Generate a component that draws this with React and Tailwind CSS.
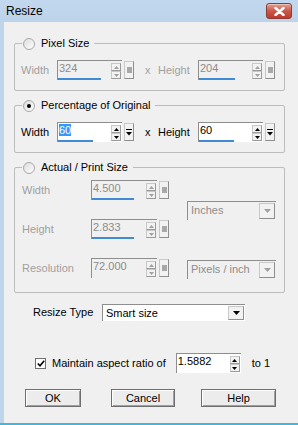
import React from 'react';

const font = { fontFamily: '"Liberation Sans", Arial, sans-serif' };

function Radio({ checked }) {
  return (
    <span className="flex h-[12px] w-[12px] items-center justify-center rounded-full border border-[#a8a8a8] bg-gradient-to-br from-[#dcdcdc] to-white">
      {checked && <span className="h-[4px] w-[4px] rounded-full bg-black" />}
    </span>
  );
}

function Group({ label, checked, className, children }) {
  return (
    <div className={`w-[271px] rounded-[2px] border border-[#bcbcbc] ${className}`}>
      <div className="-mt-[7px] ml-[7px] flex h-[13px] w-fit items-center gap-[6px] bg-[#f0f0f0] pl-[1px] pr-[5px] text-black">
        <Radio checked={checked} />
        <span>{label}</span>
      </div>
      {children}
    </div>
  );
}

function Arrow({ up, disabled }) {
  return (
    <svg width="5" height="3" viewBox="0 0 5 3" className="block">
      <path d={up ? 'M0 3h5L2.5 0z' : 'M0 0h5L2.5 3z'} fill={disabled ? '#a0a0a0' : '#000'} />
    </svg>
  );
}

function SpinBtn({ up, disabled }) {
  return (
    <div className="flex h-[8px] w-[10px] items-center justify-center border border-[#c8c8c8] border-r-[#9a9a9a] border-b-[#9a9a9a] bg-[#f2f2f2]">
      <Arrow up={up} disabled={disabled} />
    </div>
  );
}

function Spin({ value, disabled, bar, sel, square = true, w = 'w-[65px]' }) {
  return (
    <div className="flex items-start gap-[2px]">
      <div
        className={`relative flex h-[20px] ${w} border-l border-t border-[#8e8e8e] ${disabled ? 'bg-[#f0f0f0] text-[#8c8c8c]' : 'bg-white text-black'}`}
      >
        <div className="flex-1 pl-[1px] pt-[1px] leading-[13px]">
          {sel ? <span className="bg-[#3399ff] text-white">{value}</span> : value}
        </div>
        <div className="mr-[1px] mt-[2px] flex flex-col">
          <SpinBtn up disabled={disabled} />
          <SpinBtn disabled={disabled} />
        </div>
        {bar && <div className={`absolute bottom-0 left-0 h-[2px] bg-[#3f8bd6] ${bar}`} />}
      </div>
      {square && (
        <div className="mt-[1px] flex h-[18px] w-[10px] items-center justify-center border border-[#c8c8c8] border-r-[#8e8e8e] border-b-[#8e8e8e] bg-[#f2f2f2]">
          {disabled ? (
            <span className="h-[6px] w-[5px] bg-[#a8a8a8]" />
          ) : (
            <svg width="6" height="7" viewBox="0 0 6 7">
              <path d="M0 0.5h6" stroke="#000" />
              <path d="M0 3h6L3 6.5z" fill="#000" />
            </svg>
          )}
        </div>
      )}
    </div>
  );
}

function Combo({ text, disabled, w, h = 'h-[19px]' }) {
  return (
    <div
      className={`flex ${w} ${h} items-start border-l border-t border-[#8e8e8e] ${disabled ? 'bg-[#f0f0f0] text-[#8c8c8c]' : 'bg-white text-black'}`}
    >
      <span className="flex-1 pl-[3px] pt-[2px] leading-[13px]">{text}</span>
      <div className="m-[1px] flex h-[calc(100%-2px)] w-[16px] items-center justify-center border border-[#c8c8c8] border-r-[#8e8e8e] border-b-[#8e8e8e] bg-[#f2f2f2]">
        <svg width="7" height="4" viewBox="0 0 7 4">
          <path d="M0 0h7L3.5 4z" fill={disabled ? '#a0a0a0' : '#000'} />
        </svg>
      </div>
    </div>
  );
}

function Button({ children, w }) {
  return (
    <div className={`flex h-[18px] ${w} items-center justify-center border border-[#6e6e6e] bg-[#ececec] shadow-[inset_1px_1px_0_#fff,inset_-1px_-1px_0_#a0a0a0] text-black`}>
      {children}
    </div>
  );
}

export default function App() {
  return (
    <div className="flex h-[425px] w-[298px] flex-col bg-[#bfd5ec] text-[11px]" style={font}>
      <div className="flex h-[22px] shrink-0 items-center justify-between bg-gradient-to-b from-[#c2d8ee] to-[#bcd3ea] pl-[6px] pr-[6px]">
        <span className="text-[12px] text-black">Resize</span>
        <div className="flex h-[16px] w-[26px] items-center justify-center rounded-[3px] border border-[#8c3b34] bg-gradient-to-b from-[#e0a193] via-[#c9584a] to-[#c0392b] shadow-[inset_0_1px_0_#f0c0b8]">
          <svg width="11" height="9" viewBox="0 0 11 9">
            <path d="M1.5 1l8 7M9.5 1l-8 7" stroke="#fff" strokeWidth="2.4" strokeLinecap="round" />
          </svg>
        </div>
      </div>

      <div className="ml-[4px] flex flex-1 flex-col bg-[#f0f0f0] pl-[10px] text-[#a0a0a0]">
        <Group label="Pixel Size" className="mt-[21px] h-[48px]">
          <div className="mt-[10px] flex items-center pl-[6px]">
            <span className="w-[36px]">Width</span>
            <Spin value="324" disabled bar="w-[43px]" />
            <span className="ml-[11px] w-[13px]">x</span>
            <span className="w-[40px]">Height</span>
            <Spin value="204" disabled bar="w-[36px]" />
          </div>
        </Group>

        <Group label="Percentage of Original" checked className="mt-[14px] h-[48px]">
          <div className="mt-[10px] flex items-center pl-[6px] text-black">
            <span className="w-[36px]">Width</span>
            <Spin value="60" sel bar="w-[35px]" />
            <span className="ml-[11px] w-[13px]">x</span>
            <span className="w-[40px]">Height</span>
            <Spin value="60" bar="w-[35px]" />
          </div>
        </Group>

        <Group label="Actual / Print Size" className="mt-[14px] h-[126px]">
          <div className="mt-[6px] flex pl-[7px]">
            <div className="flex flex-col gap-[19px]">
              <div className="flex items-center">
                <span className="w-[69px]">Width</span>
                <Spin value="4.500" disabled bar="w-[42px]" w="w-[66px]" />
              </div>
              <div className="flex items-center">
                <span className="w-[69px]">Height</span>
                <Spin value="2.833" disabled bar="w-[42px]" w="w-[66px]" />
              </div>
              <div className="flex items-center">
                <span className="w-[69px]">Resolution</span>
                <Spin value="72.000" disabled w="w-[66px]" />
              </div>
            </div>
            <div className="ml-[18px] flex flex-col gap-[40px] pt-[21px]">
              <Combo text="Inches" disabled w="w-[89px]" />
              <Combo text="Pixels / inch" disabled w="w-[89px]" />
            </div>
          </div>
        </Group>

        <div className="mt-[11px] flex items-center pl-[19px] text-black">
          <span className="w-[69px]">Resize Type</span>
          <Combo text="Smart size" w="w-[143px]" h="h-[17px]" />
        </div>

        <div className="mt-[32px] flex items-center pl-[21px] text-black">
          <span className="flex h-[11px] w-[11px] items-center justify-center border border-[#707070] bg-white">
            <svg width="8" height="7" viewBox="0 0 8 7">
              <path d="M0.8 3.5l2.2 2.3L7.2 0.8" stroke="#000" strokeWidth="1.6" fill="none" />
            </svg>
          </span>
          <span className="ml-[6px]">Maintain aspect ratio of</span>
          <div className="ml-[10px]">
            <Spin value="1.5882" square={false} />
          </div>
          <span className="ml-[11px]">to 1</span>
        </div>

        <div className="mt-[16px] flex items-center pl-[11px]">
          <Button w="w-[56px]">OK</Button>
          <div className="ml-[30px]">
            <Button w="w-[64px]">Cancel</Button>
          </div>
          <div className="ml-[26px]">
            <Button w="w-[75px]">Help</Button>
          </div>
        </div>

        <div className="flex-1" />
      </div>
      <div className="h-[2px] shrink-0 bg-[#3fb8e0]" />
    </div>
  );
}
